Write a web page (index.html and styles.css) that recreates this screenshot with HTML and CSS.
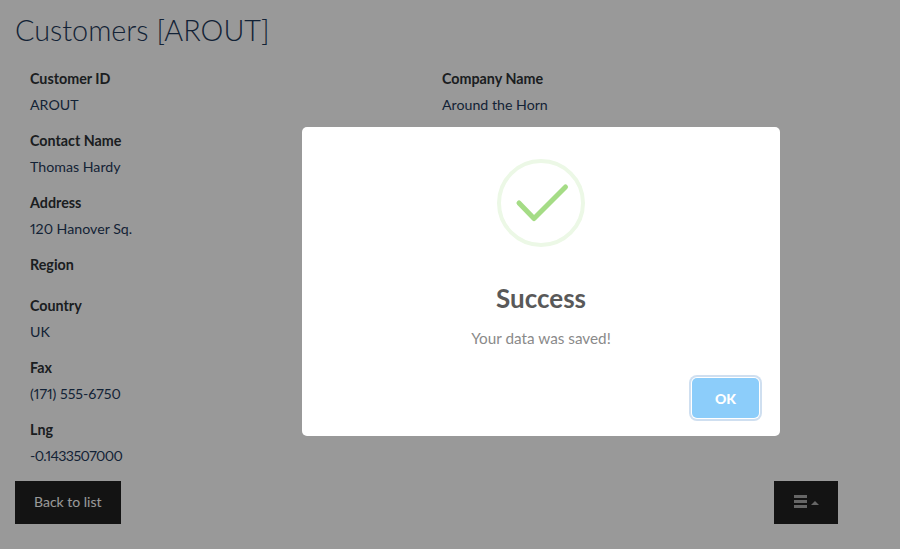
FILE: index.html
```html
<!DOCTYPE html>
<html lang="en">
<head>
    <meta charset="UTF-8">
    <title>Customers [AROUT]</title>
    <link rel="stylesheet" href="styles.css">
</head>
<body>
    <div class="page">
        <h1>Customers [AROUT]</h1>
        <div class="details">
            <div class="column">
                <div class="field"><div class="label">Customer ID</div><div class="value">AROUT</div></div>
                <div class="field"><div class="label">Contact Name</div><div class="value">Thomas Hardy</div></div>
                <div class="field"><div class="label">Address</div><div class="value">120 Hanover Sq.</div></div>
                <div class="field empty"><div class="label">Region</div></div>
                <div class="field"><div class="label">Country</div><div class="value">UK</div></div>
                <div class="field"><div class="label">Fax</div><div class="value">(171) 555-6750</div></div>
                <div class="field"><div class="label">Lng</div><div class="value value-num">-0.1433507000</div></div>
            </div>
            <div class="column">
                <div class="field"><div class="label">Company Name</div><div class="value">Around the Horn</div></div>
            </div>
        </div>
        <div class="actions">
            <button class="btn">Back to list</button>
            <button class="btn btn-menu">
                <svg width="13" height="13" viewBox="0 0 13 13"><path d="M0 0h13v3H0zM0 5h13v3H0zM0 10h13v3H0z" fill="#aaa"/></svg>
                <span class="caret"></span>
            </button>
        </div>
    </div>

    <div class="overlay">
        <div class="modal">
            <svg class="success-icon" width="88" height="88" viewBox="0 0 88 88">
                <circle cx="44" cy="44" r="42" fill="none" stroke="#ecf8e6" stroke-width="4"/>
                <path d="M22 44L37 59.500L68.500 28" fill="none" stroke="#a5dc86" stroke-width="5" stroke-linecap="round" stroke-linejoin="round"/>
            </svg>
            <h2>Success</h2>
            <p>Your data was saved!</p>
            <div class="modal-actions">
                <button class="ok">OK</button>
            </div>
        </div>
    </div>
</body>
</html>
```

FILE: styles.css
```css
body {
    margin: 0;
    height: 549px;
    overflow: hidden;
    background-color: #fff;
    color: #2e3236;
    font-family: "Lato", "Noto Sans", sans-serif;
    font-size: 14.5px;
}
.page {
    padding: 0 62px 0 15px;
}
h1 {
    margin: 0;
    padding-top: 11px;
    height: 38px;
    font-size: 28.800px;
    line-height: 38px;
    font-weight: 300;
    color: #1f3a5a;
}
.details {
    display: grid;
    grid-template-columns: 412px 1fr;
    margin-top: 18px;
    padding-left: 15px;
}
.field {
    height: 62px;
}
.field.empty {
    height: 41px;
}
.label {
    font-weight: 700;
    font-size: 14.3px;
    line-height: 24px;
    height: 26px;
}
.value {
    font-size: 14.2px;
    font-variant-numeric: proportional-nums;
    line-height: 24px;
    color: #1f3a5a;
}
.value-num {
    letter-spacing: -0.6px;
}
.actions {
    display: flex;
    justify-content: space-between;
    margin-top: 1px;
}
.btn {
    height: 43px;
    padding: 0 19px 2px;
    border: none;
    background-color: #212121;
    color: #fff;
    font-family: inherit;
    font-size: 14px;
}
.btn-menu {
    display: flex;
    align-items: center;
    gap: 4px;
    width: 64px;
    padding: 0 0 2px 20px;
}
.caret {
    width: 0;
    height: 0;
    margin-top: 3px;
    border-left: 4px solid transparent;
    border-right: 4px solid transparent;
    border-bottom: 4px solid #aaa;
}
.overlay {
    position: absolute;
    top: 0;
    left: 0;
    width: 900px;
    height: 549px;
    background-color: rgba(0, 0, 0, 0.4);
}
.modal {
    position: absolute;
    top: 127px;
    left: 302px;
    width: 478px;
    height: 309px;
    border-radius: 5px;
    background-color: #fff;
    text-align: center;
}
.success-icon {
    display: block;
    margin: 32px auto 0;
}
h2 {
    margin: 36px 0 0;
    font-size: 26px;
    line-height: 30px;
    font-weight: 700;
    color: #595959;
}
p {
    margin: 13px 0 0;
    font-size: 15.3px;
    line-height: 24px;
    color: #8a8a8a;
}
.modal-actions {
    display: flex;
    justify-content: flex-end;
    margin-top: 28px;
    padding-right: 21px;
}
.ok {
    width: 67px;
    height: 40px;
    border: none;
    border-radius: 5px;
    background-color: #8ccdfa;
    box-shadow: 0 0 0 1px #fff, 0 0 0 3px #cfdff0;
    color: #fff;
    font-family: inherit;
    font-size: 14px;
    font-weight: 900;
}
```
